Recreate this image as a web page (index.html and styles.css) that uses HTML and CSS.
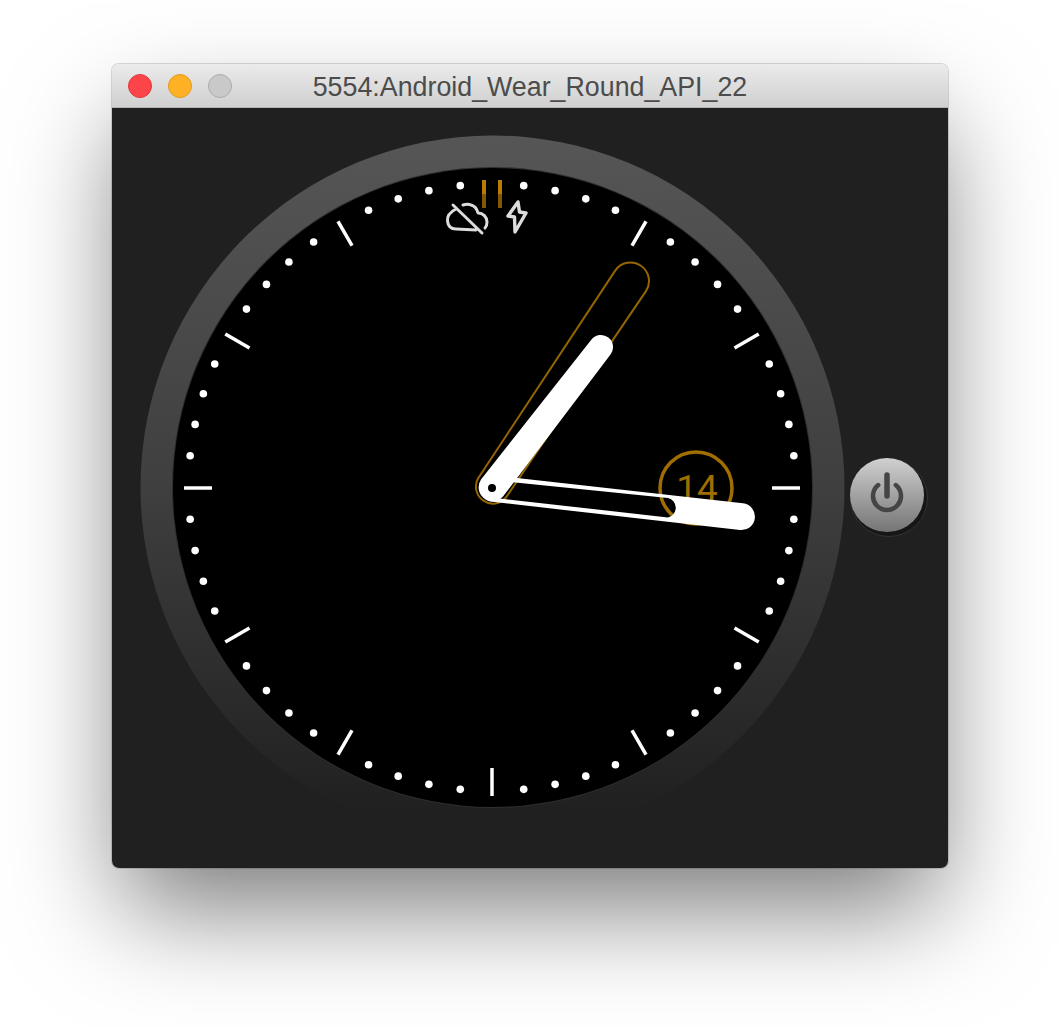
FILE: index.html
```html
<!DOCTYPE html>
<html lang="en">
<head>
    <meta charset="UTF-8">
    <title>5554:Android_Wear_Round_API_22</title>
    <link rel="stylesheet" href="styles.css">
</head>
<body>
    <div class="window">
        <div class="titlebar">
            <div class="lights">
                <span class="light close"></span>
                <span class="light minimize"></span>
                <span class="light zoom"></span>
            </div>
            <div class="title">5554:Android_Wear_Round_API_22</div>
        </div>
        <div class="screen">
            <svg class="watch" viewBox="112 108 836 760" width="836" height="760">
                <defs>
                    <linearGradient id="bezel" x1="0" y1="0" x2="0" y2="1">
                        <stop offset="0" stop-color="#565656"/>
                        <stop offset="0.5" stop-color="#3f3f3f"/>
                        <stop offset="0.96" stop-color="#202020"/>
                    </linearGradient>
                    <linearGradient id="button" x1="0" y1="0" x2="0" y2="1">
                        <stop offset="0" stop-color="#d0d0d0"/>
                        <stop offset="1" stop-color="#757575"/>
                    </linearGradient>
                    <clipPath id="face">
                        <circle cx="492.5" cy="487.5" r="319.5"/>
                    </clipPath>
                </defs>

                <circle class="bezel" cx="492.5" cy="487.5" r="352"/>
                <circle class="bezel-edge" cx="492.5" cy="487.5" r="320.5"/>
                <circle cx="492.5" cy="487.5" r="319.5" fill="#000"/>

                <g id="ticks" clip-path="url(#face)"></g>

                <rect class="bar-top" x="482" y="180" width="4" height="14"/>
                <rect class="bar-low" x="482" y="194" width="4" height="14"/>
                <rect class="bar-top" x="498" y="180" width="4" height="14"/>
                <rect class="bar-low" x="498" y="194" width="4" height="14"/>

                <!-- cloud off -->
                <path class="status-icon" d="M456 209C450 212 447 216 447.500 221C448 226 451 229 456 229L476 230M463 205C466 204 469 204 471 205C475 206 477 209 478 213C483 213 487 217 487 222C487 225 486 227 485 228M453 205L482 233"/>
                <!-- bolt -->
                <path class="status-icon bolt" d="M518 202L508 216L514.500 217L515 232L526 213L519.500 212Z"/>

                <!-- date -->
                <circle class="date-ring" cx="696" cy="488" r="36"/>
                <text class="date-text" x="697" y="501" text-anchor="middle">14</text>

                <!-- ambient outline of the hour hand -->
                <path class="amber-hand" d="M478 478.500L615.200 270.600A18.500 18.500 0 0 1 645.800 291.400L506 497.500A17 17 0 0 1 478 478.500Z"/>

                <!-- minute hand, hollow up to the solid tip -->
                <path class="minute-hand" d="M497 475.800L743 503.300A13.400 13.400 0 0 1 740 530L490 501.500A13 13 0 0 1 497 475.800ZM500 481L668 498A10 10 0 0 1 668 517.500L500 498.500Z"/>

                <!-- hour hand -->
                <path class="hour-hand" d="M481 479.400L591.500 339.600A12 12 0 0 1 610.500 354.400L503 496.600A14 14 0 0 1 481 479.400Z"/>
                <circle cx="492" cy="488" r="4" fill="#000"/>

                <!-- power button -->
                <circle class="button-rim" cx="889" cy="498" r="38.500"/>
                <circle cx="887" cy="495" r="37" fill="url(#button)"/>
                <path class="power-ring" d="M878.200 485.100A14 14 0 1 0 895.800 485.100"/>
                <line class="power-bar" x1="887" y1="475" x2="887" y2="496"/>
            </svg>
        </div>
    </div>
    <script>
        const ticks = document.getElementById('ticks');
        let marks = '';
        for (let i = 1; i < 60; i++) {
            const a = i * Math.PI / 30;
            const sin = Math.sin(a);
            const cos = Math.cos(a);
            if (i % 5 === 0) {
                marks += `<line class="tick" x1="${492 + 280 * sin}" y1="${488 - 280 * cos}" x2="${492 + 308 * sin}" y2="${488 - 308 * cos}"/>`;
            } else {
                marks += `<circle class="dot" cx="${492 + 303.5 * sin}" cy="${487.5 - 303.5 * cos}" r="3.8"/>`;
            }
        }
        ticks.innerHTML = marks;
    </script>
</body>
</html>
```

FILE: styles.css
```css
html, body {
    margin: 0;
    background-color: #fff;
}
body {
    height: 1028px;
    overflow: hidden;
    padding: 64px 0 0 112px;
    box-sizing: border-box;
}
.window {
    width: 836px;
    height: 804px;
    border-radius: 7px;
    box-shadow: 0 50px 100px -10px rgba(0,0,0,0.52), 0 0 0 1px rgba(0,0,0,0.14);
}
.titlebar {
    height: 44px;
    box-sizing: border-box;
    display: grid;
    grid-template-columns: 1fr auto 1fr;
    align-items: center;
    padding: 0 16px;
    border-radius: 7px 7px 0 0;
    border-bottom: 1px solid #b4b4b4;
    background: linear-gradient(#ebebeb, #d0d0d0);
}
.lights {
    display: flex;
    gap: 16px;
}
.light {
    width: 24px;
    height: 24px;
    box-sizing: border-box;
    border-radius: 50%;
    border: 1px solid;
}
.close {
    background-color: #fd4449;
    border-color: #e2383d;
}
.minimize {
    background-color: #ffb125;
    border-color: #e29a1e;
}
.zoom {
    background-color: #c9c9c9;
    border-color: #ababab;
}
.title {
    font-family: "Liberation Sans", Arial, sans-serif;
    font-size: 26.800px;
    padding-top: 4px;
    color: #4c4c4c;
    white-space: nowrap;
}
.screen {
    height: 760px;
    background-color: #202020;
    border-radius: 0 0 7px 7px;
    overflow: hidden;
}
.watch {
    display: block;
}
.bezel {
    fill: url(#bezel);
}
.bezel-edge {
    fill: #2e2e2e;
}
.tick {
    stroke: #fff;
    stroke-width: 3.5;
}
.dot {
    fill: #fff;
}
.bar-top {
    fill: #b67c04;
}
.bar-low {
    fill: #805703;
}
.status-icon {
    fill: none;
    stroke: #dcdcdc;
    stroke-width: 3;
    stroke-linejoin: round;
    stroke-linecap: round;
}
.bolt {
    stroke-width: 3.4;
}
.date-ring {
    fill: none;
    stroke: #a06e00;
    stroke-width: 3.5;
}
.date-text {
    font-family: Roboto, sans-serif;
    font-size: 37px;
    fill: #a06e00;
}
.amber-hand {
    fill: none;
    stroke: #946600;
    stroke-width: 2;
}
.minute-hand {
    fill: #fff;
    fill-rule: evenodd;
}
.hour-hand {
    fill: #fff;
}
.button-rim {
    fill: #161616;
    stroke: #333;
    stroke-width: 1;
}
.power-ring {
    fill: none;
    stroke: #454545;
    stroke-width: 4.5;
    stroke-linecap: round;
}
.power-bar {
    stroke: #454545;
    stroke-width: 5.5;
    stroke-linecap: round;
}
```
